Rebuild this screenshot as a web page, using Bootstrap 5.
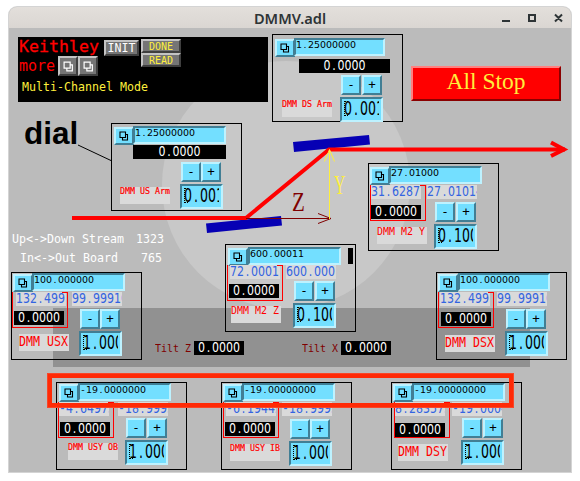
<!DOCTYPE html>
<html lang="en">
<head>
<meta charset="utf-8">
<meta name="viewport" content="width=device-width, initial-scale=1">
<title>DMMV.adl</title>
<link href="https://cdn.jsdelivr.net/npm/bootstrap@5.3.0/dist/css/bootstrap.min.css" rel="stylesheet">
<style>
body{width:580px;height:481px;overflow:hidden;background:#fff;color:#000;font-family:"DejaVu Sans Mono",monospace;line-height:1}
.win{width:562px;height:465px;margin:7px 0 0 9px;background:#bbb;border-radius:8px 8px 0 0;overflow:hidden;box-shadow:0 0 0 1px #d4d4d4}
.titlebar{height:21px;background:linear-gradient(#e3dfdb,#dad6d2);color:#2e3436;font:600 14.6px "Noto Sans",sans-serif}
.titlebar .name{line-height:22px}
.wm{right:8px;top:4px}
/* the drawing area uses window coordinates */
.board{inset:0}
.at{position:absolute}
/* text cells: m = letters, n = digits; the number is the cell width */
.m5,.m6,.m7,.n6,.n7,.n8{display:block;white-space:pre;transform-origin:0 50%}
.m5{font-size:8.3px;transform:scaleY(1.12)}
.m6{font-size:9.97px;transform:scaleY(1.05)}
.m7{font-size:11.63px;transform:scaleY(1.06)}
.m7.tall{transform:scaleY(1.22)}
.n6,.n7,.n8{font-family:"DejaVu Sans",sans-serif}
.n6{font-size:9.43px}
.n7{font-size:11px;transform:scaleY(1.22)}
.n8{font-size:12.57px;transform:scaleY(1.5)}
.n6 i,.n7 i,.n8 i{font-style:normal;padding:0 .159em}
.n6 i.neg,.n7 i.neg{padding:0 .1375em}
/* one motor */
.motor{position:absolute;width:131px;height:88px;border:1px solid #000;--bx:1px;--top:1px;--ex:0px;--ew:93px;--v:2px;--z:3px;--zg:5px;--l:7px;--lg:9px;--w:3px;--s:11px;--sg:3px;--g:0px;--e:10px;--eg:2px}
.head-row{padding:var(--top) 0 0 var(--bx)}
.key{background:#73dfff;border:2px solid;border-color:#bdf2ff #417e94 #417e94 #bdf2ff;padding:0;color:#000}
.rel{width:20px;height:18px;flex:none}
.rel svg{display:block;margin:0 0 0 3px}
.entry{background:#73dfff;border:2px solid;border-color:#417e94 #bdf2ff #bdf2ff #417e94;overflow:hidden;flex:none}
.goal{width:var(--ew);height:18px;margin:-1px 0 0 calc(var(--ex) - 1px)}
.goal span{line-height:9px}
.lcol{width:57px;flex:none;position:relative}
.rd{width:50px;height:14px;background:#dadada;color:#3264e1;overflow:hidden}
.rd span,.off span{line-height:14px}
.v1{margin-left:var(--v)}
.v2{margin-left:var(--w)}
.off{width:50px;height:14px;background:#000;color:#fff;padding-left:4px;overflow:hidden}
.lcol .off{margin:var(--zg) 0 0 var(--z)}
.tag{width:50px;height:17px;background:#dadada;color:#f00;margin:var(--lg) 0 0 var(--l);overflow:hidden}
.tag .m5{line-height:9px;-webkit-text-stroke:.2px #f00}
.tag .m6{line-height:9px}
.tag .m7{line-height:15px}
.frame{left:var(--f,1px);top:0;width:56px;height:36px;border:1px solid #f00;border-top:0}
.frame::after{content:"";position:absolute;right:0;top:0;width:5px;height:1px;background:#f00}
.steps{margin:var(--sg) 0 0 var(--s);gap:var(--g)}
.steps .key{width:20px;height:20px;font-size:12.5px;line-height:14px}
.inc{width:43px;height:25px;margin:var(--eg) 0 0 var(--e);padding-left:2px}
.inc .clip{overflow:hidden;width:35px}
.inc .n8{line-height:20px}
.inc .clip::before{content:"";position:absolute;width:4px;height:15px;border:1px dotted #000;border-right:0;margin:2px 0 0 0}
.arm .off{width:var(--ow,91px);height:14px;margin:2px 0 0 var(--o,26px);text-align:center;padding:0}
.arm .off span{transform-origin:50% 50%}
.grow-btn{color:#fff;background:#757575;border:2px solid;border-color:#c3c3c3 #3f3f3f #3f3f3f #c3c3c3;padding:0;line-height:1}
.dsarm{left:272px;top:34px;--top:4px;--bx:2px;--ew:91px;--l:9px;--lg:27px;--sg:2px;--s:11px;--g:1px;--e:10px}
.usarm{left:111px;top:123px;--top:3px;--bx:2px;--o:21px;--ow:93px;--l:8px;--lg:28px;--s:12px;--e:11px}
.usarm .off{margin-top:0}
.m2y{left:368px;top:163px;--top:3px;--z:2px;--zg:6px;--l:8px;--lg:8px;--w:1px;--s:9px;--g:1px;--e:8px}
.usx{left:11px;top:272px;--v:4px;--z:2px;--lg:9px;--f:0px}
.m2z{left:225px;top:244px;--top:3px;--bx:2px;--ex:1px;--v:4px;--l:5px;--lg:8px;--sg:2px;--g:1px}
.m2z .cols{margin-top:-1px}
.dsx{left:436px;top:272px;--ex:1px;--ew:92px;--v:3px;--z:4px;--zg:6px;--l:8px;--s:12px;--e:11px}
.ob{left:56px;top:382px;--bx:2px;--zg:6px;--l:11px;--lg:7px;--w:4px;--s:12px;--sg:2px;--g:1px;--e:11px}
.ib{left:221px;top:382px;--v:4px;--zg:6px;--l:8px;--lg:8px}
.dsy{left:391px;top:382px;--v:3px;--zg:7px;--l:6px;--lg:7px;--f:2px;--s:13px;--sg:2px;--g:1px;--e:12px}
.kbox{left:18px;top:37px;width:250px;height:65px;background:#000}
.kname{font-size:16.6px;line-height:16px;color:#f00;-webkit-text-stroke:.3px #f00;margin:2px 0 0 1px;width:85px}
.kmore{font-size:15px;line-height:18px;color:#f00;width:40px;padding:1px 0 0 1px}
.krow{margin-top:1px}
.kside{margin:2px 0 0 2px}
.mode{color:#ffef3c;margin:5px 0 0 4px;line-height:12px}
.sq{width:20px;height:20px}
.sq svg{display:block;margin:0 0 0 3px}
.init{width:35px;height:16px;margin-top:3px}
.init span{line-height:11px;text-align:center}
.ky{width:40px;height:14px;color:#ffef3c}
.ky span{line-height:9px}
.stop{left:411px;top:66px;width:150px;height:35px;background:#f00;border:2px solid;border-color:#ff8080 #8a0000 #8a0000 #ff8080;color:#ffef3c;font:23.5px/27px "Liberation Serif",serif;padding:0 0 4px}
.dial{left:24px;top:115px;font:bold 31.5px/36px "Liberation Sans",sans-serif}
.stream,.dist{top:233px;color:#fff;line-height:12px}
.stream{left:12px}
.dist{left:136px}
.row2{margin-top:7px}
.in{margin-left:8px}
.off2{margin-left:5px}
.tz,.tx{top:341px;color:#800000;gap:3px}
.tz{left:155px}
.tx{left:302px}
.tz .m6,.tx .m6{line-height:15px;width:36px}
.bar{left:348px;top:248px;width:5px;height:16px;background:#000}
.hilite{left:47px;top:373px;width:467px;height:35px;border:5px solid #ff2a06;outline:1px solid #f2604888;outline-offset:-1px}
</style>
<script src="https://cdn.jsdelivr.net/npm/bootstrap@5.3.0/dist/js/bootstrap.bundle.min.js"></script>
</head>
<body>
<svg class="d-none"><symbol id="rel" viewBox="0 0 10 10"><path d="M1 1h5.500v5.500h-5.500zM6.500 3.500h2v5.500h-5v-2.500" fill="none" stroke="currentColor" stroke-width="1.100"/></symbol></svg>
<main class="win">
  <header class="titlebar position-relative text-center"><span class="name">DMMV.adl</span>
    <svg class="wm position-absolute" width="68" height="14" fill="none" stroke="#2e3436" stroke-width="2"><path d="M7 10h8M34 4h6v6h-6zM60 3.500l7 7M67 3.500l-7 7"/></svg>
  </header>
</main>
<div class="board position-absolute">
  <svg class="position-absolute" width="580" height="481">
    <circle cx="286" cy="185" r="124" fill="#c8c8c8"/>
    <path d="M53 308h477v59H53z" fill="#919191"/>
    <path d="M293 142l76-7 1 9.500-76 7.500zM206 223.500l75-7.500 1 9.500-75 7.500z" fill="#0600b4"/>
    <path d="M72 218h174L329 149.500h236" fill="none" stroke="#f00" stroke-width="4"/>
    <path d="M551 142.500l13 7-13 6.500" fill="none" stroke="#f00" stroke-width="4"/>
    <path d="M246 218.500h85M318 213.500l13 5-13 5" fill="none" stroke="#800000"/>
    <path d="M329.500 219v-69M324.500 161.500l5-12 5 12" fill="none" stroke="#ffef3c"/>
    <path d="M78 145l34 16" stroke="#000"/>
    <text transform="translate(292 211) scale(.75 1)" font-family="Liberation Serif" font-size="28" fill="#800000">Z</text>
    <text transform="translate(334 194) scale(.56 1)" font-family="Liberation Serif" font-size="28" fill="#ffef3c">Y</text>
  </svg>

  <section class="kbox at">
    <div class="d-flex">
      <div>
        <div class="kname">Keithley</div>
        <div class="d-flex krow"><div class="kmore">more</div>
          <button class="grow-btn sq"><svg width="11" height="11"><use href="#rel"/></svg></button><button class="grow-btn sq"><svg width="11" height="11"><use href="#rel"/></svg></button></div>
      </div>
      <button class="grow-btn init"><span class="m7">INIT</span></button>
      <div class="d-flex flex-column kside"><button class="grow-btn ky"><span class="m6">DONE</span></button><button class="grow-btn ky"><span class="m6">READ</span></button></div>
    </div>
    <div class="mode m7">Multi-Channel Mode</div>
  </section>

  <button class="stop at">All Stop</button>
  <div class="dial at">dial</div>
  <div class="stream at"><div class="m7">Up&lt;-&gt;Down Stream</div><div class="m7 row2 in">In&lt;-&gt;Out Board</div></div>
  <div class="dist at"><div class="m7">1323</div><div class="m7 row2 off2">765</div></div>

  <section class="motor arm dsarm">
    <div class="head-row d-flex"><button class="key rel"><svg width="10" height="10"><use href="#rel"/></svg></button><div class="entry goal"><span class="n6">1<i>.</i>25000000</span></div></div>
    <div class="off"><span class="n7">0<i>.</i>0000</span></div>
    <div class="d-flex"><div class="lcol"><div class="tag"><span class="m5">DMM DS Arm</span></div></div>
      <div><div class="steps d-flex"><button class="key">-</button><button class="key">+</button></div><div class="entry inc"><div class="clip"><span class="n8">0<i>.</i>001</span></div></div></div></div>
  </section>

  <section class="motor arm usarm">
    <div class="head-row d-flex"><button class="key rel"><svg width="10" height="10"><use href="#rel"/></svg></button><div class="entry goal"><span class="n6">1<i>.</i>25000000</span></div></div>
    <div class="off"><span class="n7">0<i>.</i>0000</span></div>
    <div class="d-flex"><div class="lcol"><div class="tag"><span class="m5">DMM US Arm</span></div></div>
      <div><div class="steps d-flex"><button class="key">-</button><button class="key">+</button></div><div class="entry inc"><div class="clip"><span class="n8">0<i>.</i>001</span></div></div></div></div>
  </section>

  <section class="motor m2y">
    <div class="head-row d-flex"><button class="key rel"><svg width="10" height="10"><use href="#rel"/></svg></button><div class="entry goal"><span class="n6">27<i>.</i>01000</span></div></div>
    <div class="cols d-flex"><div class="lcol"><div class="frame position-absolute"></div><div class="rd v1"><span class="n7">31<i>.</i>62877</span></div><div class="off"><span class="n7">0<i>.</i>0000</span></div><div class="tag"><span class="m6">DMM M2 Y</span></div></div>
      <div><div class="rd v2"><span class="n7">27<i>.</i>01014</span></div><div class="steps d-flex"><button class="key">-</button><button class="key">+</button></div><div class="entry inc"><div class="clip"><span class="n8">0<i>.</i>100</span></div></div></div></div>
  </section>

  <section class="motor usx">
    <div class="head-row d-flex"><button class="key rel"><svg width="10" height="10"><use href="#rel"/></svg></button><div class="entry goal"><span class="n6">100<i>.</i>000000</span></div></div>
    <div class="cols d-flex"><div class="lcol"><div class="frame position-absolute"></div><div class="rd v1"><span class="n7">132<i>.</i>499</span></div><div class="off"><span class="n7">0<i>.</i>0000</span></div><div class="tag"><span class="m7 tall">DMM USX</span></div></div>
      <div><div class="rd v2"><span class="n7">99<i>.</i>99910</span></div><div class="steps d-flex"><button class="key">-</button><button class="key">+</button></div><div class="entry inc"><div class="clip"><span class="n8">1<i>.</i>000</span></div></div></div></div>
  </section>

  <section class="motor m2z">
    <div class="head-row d-flex"><button class="key rel"><svg width="10" height="10"><use href="#rel"/></svg></button><div class="entry goal"><span class="n6">600<i>.</i>00011</span></div></div>
    <div class="cols d-flex"><div class="lcol"><div class="frame position-absolute"></div><div class="rd v1"><span class="n7">72<i>.</i>0001</span></div><div class="off"><span class="n7">0<i>.</i>0000</span></div><div class="tag"><span class="m6">DMM M2 Z</span></div></div>
      <div><div class="rd v2"><span class="n7">600<i>.</i>000</span></div><div class="steps d-flex"><button class="key">-</button><button class="key">+</button></div><div class="entry inc"><div class="clip"><span class="n8">0<i>.</i>100</span></div></div></div></div>
  </section>
  <div class="bar at"></div>

  <section class="motor dsx">
    <div class="head-row d-flex"><button class="key rel"><svg width="10" height="10"><use href="#rel"/></svg></button><div class="entry goal"><span class="n6">100<i>.</i>000000</span></div></div>
    <div class="cols d-flex"><div class="lcol"><div class="frame position-absolute"></div><div class="rd v1"><span class="n7">132<i>.</i>499</span></div><div class="off"><span class="n7">0<i>.</i>0000</span></div><div class="tag"><span class="m7 tall">DMM DSX</span></div></div>
      <div><div class="rd v2"><span class="n7">99<i>.</i>99910</span></div><div class="steps d-flex"><button class="key">-</button><button class="key">+</button></div><div class="entry inc"><div class="clip"><span class="n8">1<i>.</i>000</span></div></div></div></div>
  </section>

  <div class="tz at d-flex"><span class="m6">Tilt Z</span><div class="off"><span class="n7">0<i>.</i>0000</span></div></div>
  <div class="tx at d-flex"><span class="m6">Tilt X</span><div class="off"><span class="n7">0<i>.</i>0000</span></div></div>

  <section class="motor ob">
    <div class="head-row d-flex"><button class="key rel"><svg width="10" height="10"><use href="#rel"/></svg></button><div class="entry goal"><span class="n6"><i class="neg">-</i>19<i>.</i>0000000</span></div></div>
    <div class="cols d-flex"><div class="lcol"><div class="frame position-absolute"></div><div class="rd v1"><span class="n7"><i class="neg">-</i>4<i>.</i>64973</span></div><div class="off"><span class="n7">0<i>.</i>0000</span></div><div class="tag"><span class="m5">DMM USY OB</span></div></div>
      <div><div class="rd v2"><span class="n7"><i class="neg">-</i>18<i>.</i>9995</span></div><div class="steps d-flex"><button class="key">-</button><button class="key">+</button></div><div class="entry inc"><div class="clip"><span class="n8">1<i>.</i>000</span></div></div></div></div>
  </section>

  <section class="motor ib">
    <div class="head-row d-flex"><button class="key rel"><svg width="10" height="10"><use href="#rel"/></svg></button><div class="entry goal"><span class="n6"><i class="neg">-</i>19<i>.</i>00000000</span></div></div>
    <div class="cols d-flex"><div class="lcol"><div class="frame position-absolute"></div><div class="rd v1"><span class="n7"><i class="neg">-</i>6<i>.</i>19442</span></div><div class="off"><span class="n7">0<i>.</i>0000</span></div><div class="tag"><span class="m5">DMM USY IB</span></div></div>
      <div><div class="rd v2"><span class="n7"><i class="neg">-</i>18<i>.</i>9995</span></div><div class="steps d-flex"><button class="key">-</button><button class="key">+</button></div><div class="entry inc"><div class="clip"><span class="n8">1<i>.</i>000</span></div></div></div></div>
  </section>

  <section class="motor dsy">
    <div class="head-row d-flex"><button class="key rel"><svg width="10" height="10"><use href="#rel"/></svg></button><div class="entry goal"><span class="n6"><i class="neg">-</i>19<i>.</i>00000000</span></div></div>
    <div class="cols d-flex"><div class="lcol"><div class="frame position-absolute"></div><div class="rd v1"><span class="n7">8<i>.</i>283575</span></div><div class="off"><span class="n7">0<i>.</i>0000</span></div><div class="tag"><span class="m7 tall">DMM DSY</span></div></div>
      <div><div class="rd v2"><span class="n7"><i class="neg">-</i>19<i>.</i>0004</span></div><div class="steps d-flex"><button class="key">-</button><button class="key">+</button></div><div class="entry inc"><div class="clip"><span class="n8">1<i>.</i>000</span></div></div></div></div>
  </section>
  <div class="hilite at"></div>
</div>
</body>
</html>
